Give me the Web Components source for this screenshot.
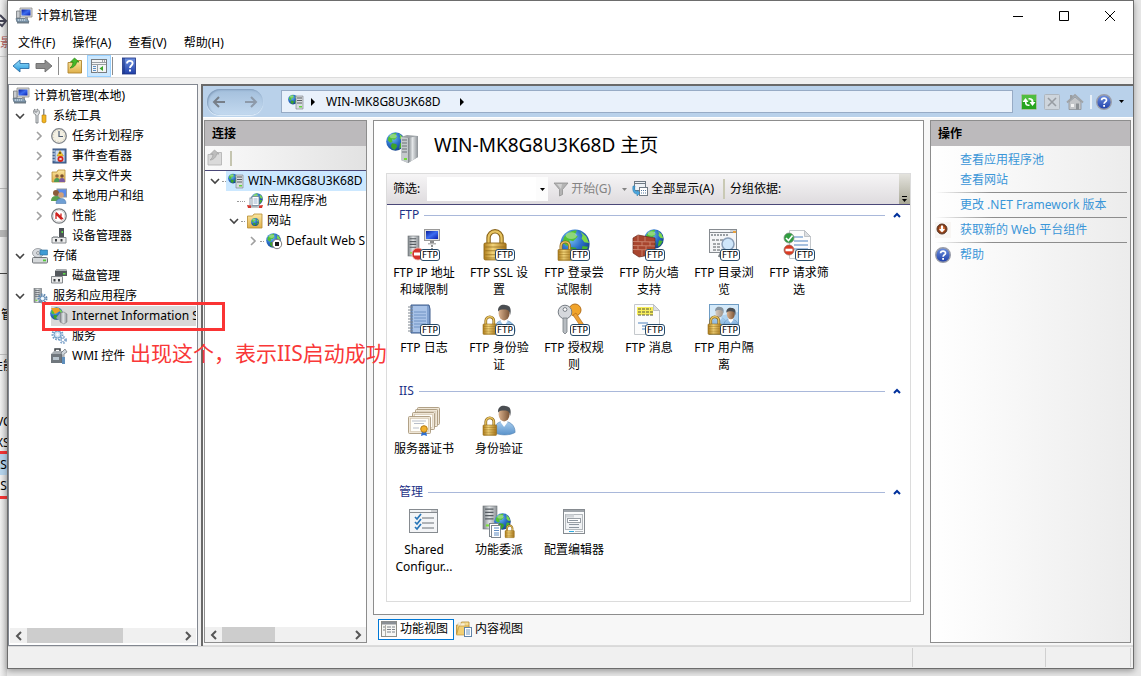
<!DOCTYPE html>
<html lang="zh-CN">
<head>
<meta charset="utf-8">
<title>计算机管理</title>
<style>
  html { height: 100%; }
  body {
    margin: 0; min-height: 100%; display: flex; background: #e6e6e6; overflow: hidden; color: #000;
    font: 12px/20px "Noto Sans", "Noto Sans CJK SC", sans-serif;
  }
  desk-sliver { flex: none; width: 7px; }
  mmc-window { flex: 1; min-width: 0; margin: 0 7px 7px 0; }
</style>
</head>
<body>
<desk-sliver></desk-sliver>
<mmc-window heading="计算机管理">
  <menu-strip slot="menu" items="文件(F)|操作(A)|查看(V)|帮助(H)"></menu-strip>
  <tool-strip slot="tools"></tool-strip>
  <console-tree slot="tree">
    <tree-row level="0" icon="computer">计算机管理(本地)</tree-row>
    <tree-row level="1" icon="tools" state="open">系统工具</tree-row>
    <tree-row level="2" icon="clock" state="closed">任务计划程序</tree-row>
    <tree-row level="2" icon="eventlog" state="closed">事件查看器</tree-row>
    <tree-row level="2" icon="share" state="closed">共享文件夹</tree-row>
    <tree-row level="2" icon="users" state="closed">本地用户和组</tree-row>
    <tree-row level="2" icon="perf" state="closed">性能</tree-row>
    <tree-row level="2" icon="device">设备管理器</tree-row>
    <tree-row level="1" icon="storage" state="open">存储</tree-row>
    <tree-row level="2" icon="disk">磁盘管理</tree-row>
    <tree-row level="1" icon="services" state="open">服务和应用程序</tree-row>
    <tree-row level="2" icon="iis" class="selected">Internet Information S</tree-row>
    <tree-row level="2" icon="gears">服务</tree-row>
    <tree-row level="2" icon="wmi">WMI 控件</tree-row>
  </console-tree>
  <iis-console slot="detail">
    <address-band slot="band" host="WIN-MK8G8U3K68D"></address-band>
    <side-panel slot="left" heading="连接">
      <connection-list></connection-list>
    </side-panel>
    <home-view slot="center" heading="WIN-MK8G8U3K68D 主页">
      <feature-group heading="FTP">
        <feature-item icon="f-ip" ftp>FTP IP 地址和域限制</feature-item>
        <feature-item icon="f-lock" ftp>FTP SSL 设置</feature-item>
        <feature-item icon="f-globelock" ftp>FTP 登录尝试限制</feature-item>
        <feature-item icon="f-wall" ftp>FTP 防火墙支持</feature-item>
        <feature-item icon="f-browse" ftp>FTP 目录浏览</feature-item>
        <feature-item icon="f-filter" ftp>FTP 请求筛选</feature-item>
        <feature-item icon="f-log" ftp>FTP 日志</feature-item>
        <feature-item icon="f-auth" ftp>FTP 身份验证</feature-item>
        <feature-item icon="f-keys" ftp>FTP 授权规则</feature-item>
        <feature-item icon="f-msg" ftp>FTP 消息</feature-item>
        <feature-item icon="f-iso" ftp>FTP 用户隔离</feature-item>
      </feature-group>
      <feature-group heading="IIS">
        <feature-item icon="f-cert">服务器证书</feature-item>
        <feature-item icon="f-auth">身份验证</feature-item>
      </feature-group>
      <feature-group heading="管理">
        <feature-item icon="f-shared">Shared Configur...</feature-item>
        <feature-item icon="f-deleg">功能委派</feature-item>
        <feature-item icon="f-config">配置编辑器</feature-item>
      </feature-group>
    </home-view>
    <side-panel slot="right" heading="操作">
      <action-links></action-links>
    </side-panel>
  </iis-console>
  <red-note slot="note">出现这个，表示IIS启动成功</red-note>
</mmc-window>

<script>
/* ---------- icon drawings ---------- */
const DEFS = `<defs>
<radialGradient id="sea" cx=".35" cy=".3" r=".8"><stop offset="0" stop-color="#7cc4f4"/><stop offset=".5" stop-color="#2a6fc9"/><stop offset="1" stop-color="#123a80"/></radialGradient>
<linearGradient id="steel"><stop offset="0" stop-color="#7d8388"/><stop offset=".45" stop-color="#e3e6e8"/><stop offset="1" stop-color="#8c9196"/></linearGradient>
<linearGradient id="gold"><stop offset="0" stop-color="#b07e1c"/><stop offset=".4" stop-color="#f2d47a"/><stop offset="1" stop-color="#a8751a"/></linearGradient>
<linearGradient id="scr" x2="1" y2="1"><stop offset="0" stop-color="#0a1f9c"/><stop offset=".5" stop-color="#3d6df0"/><stop offset="1" stop-color="#0a1fae"/></linearGradient>
<linearGradient id="fold" y2="1" x2="0"><stop offset="0" stop-color="#fbe6a0"/><stop offset="1" stop-color="#dfb04a"/></linearGradient>
<linearGradient id="skin"><stop offset="0" stop-color="#d9b08c"/><stop offset="1" stop-color="#7a5436"/></linearGradient>
<linearGradient id="shirt" x2="0" y2="1"><stop offset="0" stop-color="#a9cdee"/><stop offset="1" stop-color="#5a93cb"/></linearGradient>
<linearGradient id="blueb" x2="0" y2="1"><stop offset="0" stop-color="#6f92e0"/><stop offset="1" stop-color="#1f3fa8"/></linearGradient>
<linearGradient id="sky" x2="0" y2="1"><stop offset="0" stop-color="#9be0fb"/><stop offset="1" stop-color="#2496dc"/></linearGradient>
</defs>`;
const globe = (x, y, s) => `<g transform="translate(${x} ${y}) scale(${s / 16})"><circle cx="8" cy="8" r="7.8" fill="url(#sea)"/>
<path d="M2 4.5C4 1.5 7 .5 9 .8L8 3 9.500 4 7 6.500 5 6 5.500 8.500 3.500 9 1.500 7Z" fill="#52c234"/><path d="M11 1.500 14 4 15.500 7.500 13 7 11.500 5 12 3.500Z" fill="#7bd84a"/><path d="M5 9.500 8.500 10 9.500 12 7.500 15 5.500 14.500 4 12Z" fill="#3da22a"/><path d="M12 9 15 9.500 13 13 11 14Z" fill="#49b52f"/><ellipse cx="6" cy="3.500" rx="3" ry="1.800" fill="#fff" opacity=".35"/></g>`;
const server = (x, y, w, h) => `<g transform="translate(${x} ${y})"><rect width="${w}" height="${h}" fill="url(#steel)" stroke="#6d7276" stroke-width=".6"/><path d="M${w * .15} ${h * .14}H${w * .75}M${w * .15} ${h * .28}H${w * .75}M${w * .15} ${h * .42}H${w * .75}M${w * .15} ${h * .56}H${w * .75}" stroke="#565c62" stroke-width="${h / 18}"/><rect x="${w * .2}" y="${h * .8}" width="${w * .25}" height="${h * .09}" fill="#7be03a"/></g>`;
const lock = (x, y, s) => `<g transform="translate(${x} ${y}) scale(${s / 20})"><path d="M3.500 11V6a5 5 0 0 1 10 0v5" fill="none" stroke="#8a6418" stroke-width="3.400"/><path d="M3.500 11V6a5 5 0 0 1 10 0v5" fill="none" stroke="#e8c562" stroke-width="1.700"/><rect x="0" y="10" width="17" height="13" rx="1" fill="url(#gold)" stroke="#8f6818" stroke-width=".7"/><path d="M1 13H16M1 16H16M1 19H16M1 21.500H16" stroke="#8f6818" stroke-width=".8" opacity=".7"/></g>`;
const person = (x, y, s) => `<g transform="translate(${x} ${y}) scale(${s / 20})"><path d="M2 24C2 16 6 14 11 14s10 3 10 10c-5 3-14 3-19 0Z" fill="url(#shirt)" stroke="#5a88b5" stroke-width=".6"/><path d="M8 12h6v3l-3 4-3-4Z" fill="#fff"/><ellipse cx="11" cy="7.500" rx="5" ry="6.500" fill="url(#skin)"/><path d="M5.500 6C5 1 9-1 12 0c4 0 6 3 4.500 9-.5-4-2-5-5-5-3 0-5 0-6 2Z" fill="#4a4e52"/></g>`;
const monitor = (x, y, s) => `<g transform="translate(${x} ${y}) scale(${s / 16})"><rect x=".5" y=".5" width="15" height="11" fill="#e0e0dc" stroke="#9a9a9a"/><rect x="2" y="2" width="12" height="8" fill="url(#scr)"/><path d="M6 12h4v2H6Z" fill="#8a8a8a"/><path d="M4 14h8v1.500H4Z" fill="#b5b5b5"/></g>`;
const page = (x, y, w, h) => `<path d="M${x} ${y}h${w - 6}l6 6v${h - 6}H${x}Z" fill="#fcfcfc" stroke="#c4c8cc"/><path d="M${x + w - 6} ${y}v6h6Z" fill="#dcdfe2" stroke="#b4b8bc" stroke-width=".8"/>`;
const win = (x, y, w, h) => `<rect x="${x}" y="${y}" width="${w}" height="${h}" fill="#f4f5f7" stroke="#868b90"/><path d="M${x} ${y + 3}h${w}" stroke="#868b90"/><path d="M${x + w - 6} ${y + 1.5}h5" stroke="#5f6469" stroke-dasharray="1 1"/>`;
const cog = (x, y, r, c) => `<circle cx="${x}" cy="${y}" r="${r}" fill="none" stroke="${c}" stroke-width="2" stroke-dasharray="1.600 1.200"/><circle cx="${x}" cy="${y}" r="${r - 1.5}" fill="#cfe2f2" stroke="${c}"/><circle cx="${x}" cy="${y}" r="1.200" fill="#fff"/>`;
const cert = (x, y) => `<rect x="${x}" y="${y}" width="22" height="17" rx="1" fill="#efe6d6" stroke="#a8977c" stroke-width=".9"/><rect x="${x + 2}" y="${y + 2}" width="18" height="13" fill="#fffefa" stroke="#cdbfa6" stroke-width=".6"/>`;
const helpBall = `<circle cx="8" cy="8" r="7.300" fill="url(#blueb)" stroke="#9a9da8" stroke-width="1.400"/><path d="M5.600 6.200C5.600 3.400 10.600 3.400 10.500 6.200 10.400 7.900 8.100 8 8.100 9.800" fill="none" stroke="#fff" stroke-width="1.700"/><rect x="7.200" y="11" width="1.800" height="1.800" fill="#fff"/>`;
const ICONS = {
  computer: `<path d="M4 0h12v9H4Z" fill="#dcdcd6" stroke="#8d8d8d" stroke-width=".8"/><path d="M5.500 1.500h9v6h-9Z" fill="url(#scr)"/><path d="M.5 3h3.500v7H.5Z" fill="#c9cccf" stroke="#74797d" stroke-width=".8"/><path d="M0 10.500h11l2 3.500H1Z" fill="#8aa3b8" stroke="#4f6272" stroke-width=".7"/><path d="M1 14h12v1.500H1Z" fill="#6e7d88"/><path d="M2 12h8" stroke="#e8eef3" stroke-dasharray="1 1"/><path d="M9 9h3v2H9Z" fill="#9a9a9a"/>`,
  tools: `<path d="M4 15V7C1 6 1 2 3 1v3h2V1c3 1 3 5 1 6v8Z" fill="#e2e4e6" stroke="#6d7276" stroke-width=".8"/><path d="M11 1h1.500v6H11Z" fill="#8a8f94"/><path d="M10 7h4v7q-2 2-4 0Z" fill="#f2b521" stroke="#b07a10" stroke-width=".6"/>`,
  clock: `<circle cx="8" cy="8" r="7.300" fill="#f3f0e4" stroke="#80858a" stroke-width="1.300"/><circle cx="8" cy="8" r="5.600" fill="none" stroke="#d0c9b0" stroke-dasharray="1 2"/><path d="M8 3v5.500h4" fill="none" stroke="#4e5e76" stroke-width="1.200"/>`,
  eventlog: `<rect x="2" y="1" width="13" height="14" fill="#5577a8" stroke="#35507c"/><rect x="4.500" y="2.500" width="9" height="11" fill="#cddcf0"/><path d="M1 3h3M1 6h3M1 9h3M1 12h3" stroke="#dfe5ec"/><path d="M9 2.500 12.500 8H6Z" fill="#f9c52b" stroke="#b58910" stroke-width=".5"/><path d="M9 4v2" stroke="#000"/><circle cx="9.500" cy="11" r="3" fill="#d8261c"/><path d="m8.500 10 2 2m0-2-2 2" stroke="#fff"/>`,
  share: `<path d="M1 4h5l1-2h7v12H1Z" fill="url(#fold)" stroke="#b58a30" stroke-width=".8"/><circle cx="6" cy="8" r="1.800" fill="#9a6a40"/><circle cx="11" cy="8" r="1.800" fill="#7a5030"/><path d="M3 14q0-4 3-4t3 4Z" fill="#4d9a55"/><path d="M8 14q0-4 3-4t3 4Z" fill="#7a5aa0"/>`,
  users: `<rect x="6" y="1" width="9.500" height="8" fill="#5a8ae8" stroke="#8f979f"/><circle cx="5" cy="5" r="3" fill="#8a5c3a"/><path d="M0 13q0-5 5-5t5 5Z" fill="#5aa04e"/><circle cx="10" cy="7" r="2.800" fill="#d0a07a"/><path d="M5 15.500q0-5 5-5t5 5Z" fill="#6f9fd4" stroke="#416fa5" stroke-width=".5"/>`,
  perf: `<circle cx="8" cy="8" r="7.200" fill="#fff" stroke="#75797d" stroke-width="1.300"/><circle cx="8" cy="8" r="5.800" fill="none" stroke="#c9c9c9" stroke-width=".7"/><path d="M5 11V6l5 5V5.500M5 4.500l7 6.500" fill="none" stroke="#d0201c" stroke-width="1.300"/>`,
  device: `<rect x="8" y="0" width="5" height="9" fill="#4e5357"/><rect x="10.500" y="3" width="1.500" height="2" fill="#5fe04a"/><path d="M1 9.500h14v5.500H1Z" fill="#ececec" stroke="#85898d"/><rect x="4" y="11" width="2" height="2.500" fill="#3b3f43"/><rect x="9.500" y="11" width="2" height="2.500" fill="#3b3f43"/><path d="M2 8h5v1.500H2Z" fill="#b7babd"/>`,
  storage: `<ellipse cx="6" cy="5" rx="5.500" ry="4.500" fill="#d7dade" stroke="#8e9398" stroke-width=".8"/><circle cx="6" cy="5" r="1.400" fill="#fff" stroke="#8e9398"/><rect x="8" y="2" width="7.500" height="5" fill="#3f9bd4" stroke="#2a6c98" stroke-width=".6"/><rect x=".5" y="9.500" width="15" height="5.500" rx="1" fill="#d5d8da" stroke="#707478"/><rect x="11" y="11.500" width="3" height="1.800" fill="#52c838"/>`,
  disk: `<path d="M4 3l2-2h9l1 2v5H4Z" fill="#54595d"/><path d="M4 3l2-2h9l1 2Z" fill="#a9adb0"/><rect x="12" y="5" width="2.500" height="1.500" fill="#5fe04a"/><path d="M.5 8.500h11v6.500H.5Z" fill="#ececec" stroke="#85898d"/><rect x="2.500" y="11" width="2" height="2.500" fill="#3b3f43"/><rect x="7" y="11" width="2" height="2.500" fill="#3b3f43"/>`,
  services: server(2, 0.5, 7.5, 14) + cog(10.5, 10.5, 4, '#5d87b0'),
  iis: globe(-1, -1, 13) + `<path d="M0 0 8 0 9 3 4 6Z" fill="#f0a020"/><path d="M9 5l4-1 3 2v8l-3 2-4-2Z" fill="url(#steel)" stroke="#777" stroke-width=".5"/><path d="M5 10l4-5v8Z" fill="#8fa6b8"/>`,
  gears: cog(6.5, 6.5, 5, '#6d9cc6') + cog(12, 12, 3, '#88aace'),
  wmi: `<path d="M0 6h13v9H0Z" fill="#70777d"/><path d="M0 6l3-3h9l1 3Z" fill="#a7adb2"/><path d="M4 3V1h5v2" fill="none" stroke="#3d4246" stroke-width="1.500"/><path d="M10 5l4-4 2 3-3 2v9h-2V7Z" fill="#cfd6dc" stroke="#545b61" stroke-width=".6"/><rect x="2" y="9" width="6" height="3" fill="#b7c3cc"/><path d="M11 9h3v7h-3Z" fill="#5f8fbd"/>`,
  back: `<path d="M0 8 7 2v3.500h9v5H7V14Z" fill="url(#sky)" stroke="#2c6ea5" stroke-width=".9"/>`,
  fwd: `<path d="M16 8 9 2v3.500H0v5h9V14Z" fill="#8d8d8d" stroke="#6b6b6b" stroke-width=".9"/>`,
  up: `<path d="M1 4.500h5l1-2h7.500V15H1Z" fill="url(#fold)" stroke="#b0852c" stroke-width=".9"/><path d="M3 10C4.500 9 6 7 6 4H3.500L7.500 0 12 4H9.500C9.500 7 6 10 3 10Z" fill="#46b928" stroke="#2a8515" stroke-width=".7"/>`,
  upoff: `<path d="M1 4.500h5l1-2h7.500V15H1Z" fill="#dadada" stroke="#b5b5b5" stroke-width=".9"/><path d="M3 10C4.500 9 6 7 6 4H3.500L7.500 0 12 4H9.500C9.500 7 6 10 3 10Z" fill="#bdbdbd" stroke="#a2a2a2" stroke-width=".7"/>`,
  props: `<rect x=".5" y="1.500" width="15" height="13" fill="#f5f5f5" stroke="#777c80"/><path d="M1 4.500h14M1 6.500h14M6.500 7v8" stroke="#9a9fa3"/><path d="M2 8.500h3M2 10.500h3M2 12.500h3" stroke="#5b8fc4"/><path d="M12 8v5l-3.500-2.500Z" fill="#3aa528"/><path d="M11 3h3" stroke="#555" stroke-dasharray="1 1"/>`,
  helpbook: `<rect x="1.500" width="13" height="16" fill="url(#blueb)" stroke="#1d3180" stroke-width=".8"/><path d="M3 0v16" stroke="#16307e"/><path d="M6 5.500C6 2 12 2 11.600 5.500 11.500 7.500 9 7.500 9 10" fill="none" stroke="#fff" stroke-width="1.900"/><rect x="8" y="11.500" width="2" height="2" fill="#fff"/>`,
  help: helpBall,
  host: globe(0, 0.5, 10) + `<path d="M8 2h7v13H8Z" fill="#d9dcde" stroke="#767b80" stroke-width=".6"/><path d="M9 4h5M9 6.500h5M9 9h5" stroke="#595f64"/><rect x="11" y="12" width="3" height="1.500" fill="#5fd63a"/>`,
  pool: globe(4, 0, 12) + `<rect x="3" y="5" width="7" height="8" fill="#fff" stroke="#6d8296" stroke-width=".8"/><rect x="5" y="3.500" width="7" height="9" fill="#fff" stroke="#6d8296" stroke-width=".8"/><path d="M6.500 6h4M6.500 8h4M6.500 10h4" stroke="#7d9cc0" stroke-width=".8"/><path d="M0 12l4 .5v2.500H1ZM16 12l-4 .5v2.500h3Z" fill="#d5362c"/><path d="M4 14h8" stroke="#8e9296"/>`,
  sites: `<path d="M.5 3h5l1.500-2H15v14H.5Z" fill="url(#fold)" stroke="#b58a30" stroke-width=".8"/>` + globe(4, 5, 8),
  site: globe(0, 0, 15) + `<circle cx="11" cy="11" r="4.700" fill="#fff" stroke="#7d7d7d"/><rect x="9" y="9" width="4" height="4" fill="#1d1d1d"/>`,
  refresh: `<rect x=".5" y=".5" width="15" height="15" rx="1" fill="#27a51f" stroke="#a9c0a5"/><path d="M1 1h14v6H1Z" fill="#69cf55" opacity=".6"/><path d="M1.500 8 4.500 4 7.500 8H5.500V9.500H4V8ZM14.500 8 11.500 12 8.500 8H10.500C10.500 6 9.500 5.500 7.500 5.500V4C11 4 12.500 5 12.500 8ZM5.500 8C5.500 10 6 10.500 8.500 10.500V12C5 12 4 11 4 8Z" fill="#fff"/>`,
  stop: `<rect x=".5" y=".5" width="15" height="15" rx="1" fill="#ced5dc" stroke="#aeb6be"/><path d="m4 4 8 8m0-8-8 8" stroke="#979ca2" stroke-width="1.600"/>`,
  home: `<path d="M2 8v7.500h12V8L8 3Z" fill="#c4c6c9" stroke="#8d9195" stroke-width=".8"/><path d="M0 8.500 8 1l8 7.500" fill="none" stroke="#a0a4a8" stroke-width="1.800"/><path d="M3 1h2.500v3L3 6Z" fill="#9a9ea2"/><rect x="4" y="10" width="3" height="3" fill="#f2f2f2"/><rect x="9" y="9.500" width="3" height="6" fill="#8d9195"/>`,
  funnel: `<path d="M1 2h14l-5.500 6.500v5L6.500 15V8.500Z" fill="#b4b4b4" stroke="#909090" stroke-width=".8"/><path d="M4 3h5l-1 5Z" fill="#d2d2d2"/>`,
  showall: `<rect x="2.500" y=".5" width="11" height="9" fill="#eef2f6" stroke="#707a84"/><path d="M2.500 2.500h11" stroke="#707a84"/><rect x="7.500" y="6.500" width="8" height="8" fill="#fff" stroke="#707a84"/><path d="M9 9.500h6M9 12h6" stroke="#52789e" stroke-dasharray="1 1"/><path d="M1 5c-1 5 1 8 4 8v2l3-3-3-3v2C3 10 2 8 3 5Z" fill="#4aa5dd" stroke="#2879a8" stroke-width=".5"/>`,
  features: `<rect x=".5" y=".5" width="15" height="15" fill="#f7f7f4" stroke="#8d8d86"/><path d="M1 2h14" stroke="#8a8f95" stroke-width="3"/><path d="M4.500 4v11" stroke="#b0b0a8"/><path d="M6 6h4M6 8.500h4M6 11h4M11 6h3M11 8.500h3M11 11h3M2 6h2M2 9h2" stroke="#7d8288"/>`,
  content: `<path d="M.5 4h4l1-3H13v12H.5Z" fill="url(#fold)" stroke="#b58a30" stroke-width=".8"/><path d="M2 2h7v10H2Z" fill="#fff" stroke="#c0a050" stroke-width=".5" opacity=".6"/><path d="M.5 14 3 5h10l-2 9Z" fill="#f2cf73" stroke="#b58a30" stroke-width=".6"/><rect x="8.500" y="6.500" width="7" height="9" fill="#fff" stroke="#5f83a8"/><path d="M10 9h4M10 11h4M10 13h4" stroke="#6c98c4"/>`,
  down: `<rect width="16" height="16" fill="#f8f6f4"/><circle cx="7" cy="7" r="5" fill="#8a3c16" stroke="#5b3a2a"/><circle cx="7" cy="7" r="3" fill="#d0703a"/><path d="M6 3.500h2V7h2L7 10.500 4 7h2Z" fill="#fff"/>`
};
const BIG = {
  'host32': globe(0, 1, 19) + `<path d="M15 6 21 4 32 5V26L22 32 15 29Z" fill="#9ba1a5"/><path d="M15 6 22 7V32L15 29Z" fill="#c4c9cc"/><path d="M22 7 32 5V26L22 32Z" fill="url(#steel)"/><path d="M16 9h5M16 12h5M16 15h5M16 18h5M16 21h5" stroke="#6d7377"/><rect x="18" y="27" width="3" height="2" fill="#72dc38"/>`,
  'f-ip': server(0, 7, 11, 20) + monitor(16, 0, 16) + `<path d="M24 16v4" stroke="#222" stroke-dasharray="2 1"/><circle cx="10" cy="25" r="6" fill="#d5342c" stroke="#f0b0a8" stroke-width=".8"/><rect x="6" y="23.500" width="8" height="3" fill="#fff"/>`,
  'f-lock': lock(1, 1, 26),
  'f-globelock': globe(2, 0, 30) + lock(0, 12, 17),
  'f-wall': globe(11, 0, 20) + `<path d="M0 9 5 6 22 9V25L6 28 0 24Z" fill="#a8452e" stroke="#6b2a1c" stroke-width=".7"/><path d="M0 12.500 22 13M0 16.500 22 17M0 20.500 22 21M5 6V12.500M12 8V12.500M9 13V17M17 13V17M5 17V20.500M13 17V21M9 21V27M17 21V26" stroke="#d08f78" stroke-width=".8"/>`,
  'f-browse': win(1.5, 0.5, 27, 23) + `<path d="M3 6h18" stroke="#9a9fa4" stroke-dasharray="2 1" stroke-width="2"/><path d="M4 11h12M5 15h7M5 18h7M5 21h7" stroke="#53585d" stroke-dasharray="3 1"/><circle cx="20" cy="15" r="6" fill="#cfe6fa" stroke="#8b9fb8" stroke-width="1.500"/><path d="M15 20l-4 8" stroke="#7c8288" stroke-width="2.500"/><rect x="25" y="2" width="3" height="2" fill="#e9a03a"/>`,
  'f-filter': page(6.5, 1.5, 21, 28) + `<path d="M11 8h9M11 12h14M11 16h14M11 20h14" stroke="#4f83c0"/><circle cx="6" cy="9" r="5" fill="#2f9e3f" stroke="#7d8a7f" stroke-width=".7"/><path d="M3 9l2.500 2.500L9.500 6.500" fill="none" stroke="#fff" stroke-width="1.600"/><circle cx="6" cy="21" r="5" fill="#dc3a22" stroke="#8f6a60" stroke-width=".7"/><rect x="2.500" y="19.700" width="7" height="2.600" fill="#fff"/>`,
  'f-log': `<path d="M3 1h18l1 4v24H3Z" fill="#7fa0cf" stroke="#3f5c8c"/><path d="M5 2h14v26H5Z" fill="#a9c3e8"/><path d="M6 8h12M6 11h12M6 14h12M6 17h12M6 20h12M6 23h12" stroke="#6f92c4"/><path d="M0 3h5M0 6h5M0 9h5M0 12h5M0 15h5M0 18h5M0 21h5M0 24h5M0 27h5" stroke="#7d858e"/>`,
  'f-auth': person(9, 1, 22) + lock(0, 12, 16),
  'f-keys': `<circle cx="17" cy="6" r="6" fill="#f1a42a" stroke="#b5701a"/><path d="M18 9l8 12-3 2-8-12Z" fill="#eda035" stroke="#b5701a" stroke-width=".7"/><circle cx="7" cy="8" r="6.800" fill="#d5d8dc" stroke="#777d84"/><circle cx="7" cy="5.500" r="1.900" fill="#fff" stroke="#777d84"/><path d="M5 14h4v14l-2 2-2-2Z" fill="#b8bdc2" stroke="#777d84" stroke-width=".8"/>`,
  'f-msg': page(1.5, 0.5, 25, 30) + `<path d="M4 3h16v8H4Z" fill="#f8ee5a"/><path d="M5 5h13M5 8h16M5 11h16" stroke="#55553a" stroke-dasharray="3 1"/><path d="M5 19h10M9 22h7M9 25h7" stroke="#4f83c0"/>`,
  'f-iso': `<rect x="1.500" y=".5" width="29" height="30" fill="#aed2f0" stroke="#6e9cc4"/><path d="M2 1h28v7L2 14Z" fill="#e4f2fc" opacity=".7"/><g opacity=".55">${person(3, 3, 15)}</g>` + person(14, 4, 16) + lock(0, 12, 16),
  'f-cert': cert(9.5, 2.5) + cert(7.5, 4.5) + cert(4.5, 7.5) + cert(0.5, 11.5) + `<path d="M4 16h14M6 18.500h10M5 23h6" stroke="#b9bfca"/><path d="M14 26l-1 5 3-1 3 1-1-5Z" fill="#2f6fd0"/><circle cx="16" cy="24" r="3.300" fill="#f1b02c" stroke="#b57c14"/>`,
  'f-shared': win(1.5, 3.500, 28, 23) + `<path d="M14 12h12M14 17h12M14 22h12" stroke="#6a7076"/><path d="m7 11 2 2 4-5M7 16l2 2 4-5M7 21l2 2 4-5" fill="none" stroke="#2a76b8" stroke-width="1.700"/>`,
  'f-deleg': server(0, 0, 14, 23) + globe(11, 7, 17) + `<rect x="6.500" y="17.500" width="9" height="13" fill="#fff" stroke="#7d858d"/><rect x="8.500" y="19.500" width="9" height="12" fill="#fff" stroke="#7d858d"/><path d="M11 22h5M11 24.500h5M11 27h5M11 29h5" stroke="#5f8cc2"/>` + lock(22, 19, 11),
  'f-config': `<rect x="5.500" y="3.500" width="21" height="24" fill="#fafbfc" stroke="#868b90"/><path d="M6 5h20" stroke="#9ea4aa" stroke-width="2"/><rect x="7.500" y="8.500" width="17" height="15" fill="#f0f2f4" stroke="#b4b9bd"/><path d="M8 8.500h8v3H8Z" fill="#d0d4d8"/><rect x="9.500" y="12.500" width="13" height="4" fill="#fff" stroke="#9aa0a6"/><path d="M11 14.500h9M11 18.500h10M11 21.500h10" stroke="#8d96a0"/><path d="M11 25.500h5" stroke="#2fa9dc"/><path d="M17 25.500h8" stroke="#b4b9bd"/>`
};

/* ---------- base element ---------- */
class Base extends HTMLElement {
  connectedCallback() {
    if (this.shadowRoot) return;
    const t = document.createElement('template');
    t.innerHTML = `<style>*{box-sizing:border-box}button{font:inherit;color:inherit;border:0;background:none;padding:0;margin:0}:host{box-sizing:border-box}${this.css ? this.css() : ''}</style>${this.html()}`;
    this.attachShadow({ mode: 'open' }).appendChild(t.content.cloneNode(true));
  }
  at(n, d = '') { return this.getAttribute(n) || d; }
}
const def = (name, css, html) => customElements.define(name, class extends Base {
  css() { return css; }
  html() { return typeof html === 'function' ? html(this) : html; }
});

def('ui-icon', `:host{display:inline-flex;flex:none}svg{display:block;overflow:visible}`, el => {
  const n = el.at('name'), big = n in BIG, s = big ? 32 : 16;
  return `<svg width="${s}" height="${s}" viewBox="0 0 ${s} ${s}" aria-hidden="true">${DEFS}${big ? BIG[n] : ICONS[n]}</svg>`;
});

/* Slice of the windows behind this one */
def('desk-sliver', `
  :host{display:flex;flex-direction:column;overflow:hidden;background:linear-gradient(90deg,#f0f0f0,#d2d2d2);white-space:nowrap;line-height:21px}
  div{flex:none}
  span{display:block;width:24px;margin-left:-8px}
  .far{margin-left:-4px}
  .ink{height:57px;border-bottom:1px solid #c5c5c5;color:#a55}
  .ink span{margin-left:0}
  .pen{width:7px;height:20px;display:block;margin:12px 0 0}
  .plain{height:247px;background:linear-gradient(transparent 0 131px,#b5b5b5 131px 132px,transparent 132px 173px,#b5b5b5 173px 180px,transparent 180px 216px,#444 216px 217px,transparent 217px)}
  .r1{height:50px}.r1 span{margin-left:1px}.r2{height:57px;border-top:1px solid #bbb}
  .r2 span{margin-left:-9px}
  .names{height:40px}
  .hit{border:solid #f03535;border-width:3px 0;height:48px}
  .on{background:#b4d2ea}
`, `<div class="ink"><svg class="pen" viewBox="0 0 7 20" aria-hidden="true"><path d="M0 3 6 9 2 14 0 12M0 9H6" fill="none" stroke="#445" stroke-width="2"/></svg><span>景</span></div>
<div class="plain"></div><div class="r1"><span>管</span></div><div class="r2"><span>性能</span></div>
<div class="names"><span class="far">VC</span><span class="far">XS</span></div><div class="hit"><span class="on">IIS</span><span>IIS</span></div>`);

def('mmc-window', `
  :host{display:flex;flex-direction:column;position:relative;border:1px solid #6d6d6d;background:#f0f0f0;box-shadow:0 2px 6px #0005}
  header{display:flex;align-items:center;height:30px;padding-left:8px;background:#fff}
  h1{flex:1;margin:0 0 0 5px;font-size:12px;font-weight:400}
  header button{width:46px;height:30px;display:grid;place-items:center}
  main{flex:1;min-height:0;display:grid;grid-template-columns:190px minmax(0,1fr);gap:3px;margin-top:6px}
  footer{height:22px;border-top:1px solid #d9d9d9;display:grid;grid-template-columns:1fr 133px 85px 2px}
  footer i{border-right:1px solid #d0d0d0;margin:1px 0}
`, el => `<header><ui-icon name="computer"></ui-icon><h1>${el.at('heading')}</h1>
<button aria-label="最小化"><svg width="10" height="10"><path d="M0 5.500H10" stroke="#000"/></svg></button>
<button aria-label="最大化"><svg width="10" height="10"><path d="M.5 .5H9.500V9.500H.5Z" fill="none" stroke="#000"/></svg></button>
<button aria-label="关闭"><svg width="10" height="10"><path d="M0 0 10 10M10 0 0 10" stroke="#000"/></svg></button></header>
<slot name="menu"></slot><slot name="tools"></slot><main><slot name="tree"></slot><slot name="detail"></slot></main><footer><i></i><i></i><i></i></footer><slot name="note"></slot>`);

def('menu-strip', `:host{display:flex;gap:17px;height:24px;padding:0 10px;background:#fff;border-bottom:1px solid #b0b0b0}button{white-space:nowrap}`,
  el => el.at('items').split('|').map(t => `<button>${t}</button>`).join(''));

def('tool-strip', `:host{display:flex;align-items:center;height:23px;padding-left:5px;background:#fff;border-bottom:1px solid #dcdcdc}
  button{display:flex}button+button{margin-left:7px}i{width:1px;height:18px;background:#8d8d8d;margin:0 8px 0 6px}
  .on{width:24px;height:22px;background:#cce8ff;border:1px solid #99d1ff;justify-content:center;align-items:center}button+.on{margin-left:4px}.on+i{margin:0 8px 0 1px}`,
  `<button aria-label="后退"><ui-icon name="back"></ui-icon></button><button aria-label="前进"><ui-icon name="fwd"></ui-icon></button><i></i>
<button aria-label="上移一级"><ui-icon name="up"></ui-icon></button><button class="on" aria-label="显示/隐藏"><ui-icon name="props"></ui-icon></button><i></i><button aria-label="帮助"><ui-icon name="helpbook"></ui-icon></button>`);

def('tree-row', `
  :host{display:flex;align-items:center;height:20px;white-space:nowrap;overflow:hidden;padding-left:4px}
  :host([level="1"]){padding-left:4px}:host([level="2"]){padding-left:23px}
  button,.gap{flex:none;width:14px;height:14px;margin-right:5px;display:grid;place-items:center}
  .body{flex:1;display:flex;align-items:center;height:20px}
  :host(.selected) .body{background:#d9d9d9}
  .body span{padding-left:5px}`, el => {
  const s = el.at('state'), lead = el.at('level') === '0' ? '' : s ? `<button aria-label="${s === 'open' ? '折叠' : '展开'}"><svg width="10" height="10"><path d="${s === 'open' ? 'M1 3 5 7 9 3' : 'M3 1 7 5 3 9'}" fill="none" stroke="${s === 'open' ? '#444' : '#a0a0a0'}" stroke-width="1.600"/></svg></button>` : '<i class="gap"></i>';
  return `${lead}<div class="body"><ui-icon name="${el.at('icon')}"></ui-icon><span><slot></slot></span></div>`;
});

def('scroll-rail', `
  :host{display:flex;height:15px;background:#f0f0f0}
  button{flex:none;width:17px;display:grid;place-items:center}
  .track{flex:1}.thumb{height:15px;background:#cdcdcd}
  :host([size="s"]) .thumb{width:42%}:host([size="l"]) .thumb{width:63%}`,
  `<button aria-label="向左"><svg width="8" height="10"><path d="M6 1 2 5 6 9" fill="none" stroke="#555" stroke-width="2"/></svg></button><div class="track"><div class="thumb"></div></div>
<button aria-label="向右"><svg width="8" height="10"><path d="M2 1 6 5 2 9" fill="none" stroke="#555" stroke-width="2"/></svg></button>`);

def('console-tree', `:host{display:flex;flex-direction:column;border:1px solid #828790;background:#fff;padding:1px 1px 2px 0;min-width:0}.rows{flex:1}scroll-rail{margin-left:1px}`,
  `<div class="rows"><slot></slot></div><scroll-rail size="l"></scroll-rail>`);

def('iis-console', `
  :host{display:flex;flex-direction:column;min-width:0;border:solid #696969;border-width:2px 0 0 2px;background:#f7f7f7}
  .cols{flex:1;display:grid;grid-template-columns:163px minmax(0,1fr) 201px;gap:6px;padding:2px 2px 2px 1px;border:solid #fff;border-width:1px 0 0;border-bottom:1px solid #dcdcdc}`,
  `<slot name="band"></slot><div class="cols"><slot name="left"></slot><slot name="center"></slot><slot name="right"></slot></div>`);

def('address-band', `
  :host{display:flex;align-items:center;height:31px;padding:0 9px 0 4px;background:#b9d1ea}
  .nav{display:flex;width:56px;height:26px;justify-content:space-between;align-items:center;padding:0 5px;border-radius:13px;background:linear-gradient(#a3bfdc,#c3d9ef);box-shadow:inset 1px 1px 2px #7e99b8,0 1px 1px #e2eefa}
  .nav button{display:flex}
  .box{flex:1;display:flex;align-items:center;height:23px;margin:0 8px 0 18px;padding-left:6px;background:#e9f1fb;border:1px solid #97abc5;white-space:nowrap}
  .box b{font-weight:400;padding:0 12px 0 10px}
  .box svg{flex:none;margin-left:6px}
  .btns{display:flex;align-items:center;gap:7px;height:28px}.btns button{display:flex}.btns i{width:2px;height:14px;background:#e8f0f8;margin:0 -3px 0 0}`,
  el => `<div class="nav"><button aria-label="后退"><svg width="14" height="12"><path d="M13 6H2M7 1 2 6 7 11" fill="none" stroke="#777f89" stroke-width="2"/></svg></button><button aria-label="前进"><svg width="14" height="12"><path d="M1 6H12M7 1 12 6 7 11" fill="none" stroke="#8d9aaa" stroke-width="2"/></svg></button></div>
<div class="box"><ui-icon name="host"></ui-icon><svg width="6" height="8"><path d="M1 0 5 4 1 8Z"/></svg><b>${el.at('host')}</b><svg width="6" height="8"><path d="M1 0 5 4 1 8Z"/></svg></div>
<div class="btns"><button aria-label="刷新"><ui-icon name="refresh"></ui-icon></button><button aria-label="停止"><ui-icon name="stop"></ui-icon></button><button aria-label="主页"><ui-icon name="home"></ui-icon></button><i></i><button aria-label="帮助"><ui-icon name="help"></ui-icon></button><svg width="5" height="3"><path d="M0 0H5L2.500 3Z"/></svg></div>`);

def('side-panel', `
  :host{display:flex;flex-direction:column;min-width:0;border:1px solid #8d8d8d;background:#fff}
  h2{margin:0;height:25px;line-height:25px;padding-left:7px;font-size:12px;font-weight:700;background:#bcbabc}
  ::slotted(*){flex:1}`, el => `<h2>${el.at('heading')}</h2><slot></slot>`);

def('connection-list', `
  :host{display:flex;flex-direction:column;min-width:0}
  .bar{height:25px;display:flex;align-items:center;gap:7px;padding-left:2px;background:linear-gradient(90deg,#fafafa,#e2e2e2);border-bottom:1px solid #4a4878}
  .bar i{width:2px;height:15px;background:#c5c5b0}
  .bar button{display:flex}
  .rows{flex:1}
  .row{display:flex;align-items:center;height:20px;white-space:nowrap;overflow:hidden;padding-left:3px}
  .row button{flex:none;width:14px;height:14px;display:grid;place-items:center}
  .row ui-icon{margin-left:2px;margin-right:4px}
  .lead{flex:none;width:4px;border-top:1px dotted #999}
  .hot{flex:1;display:flex;align-items:center;background:#cce8ff}
  .a{padding-left:32px}.a .lead{width:8px}.b{padding-left:22px}.c{padding-left:41px}
`, (() => {
  const ch = o => `<button aria-label="${o ? '折叠' : '展开'}"><svg width="10" height="10"><path d="${o ? 'M1 3 5 7 9 3' : 'M3 1 7 5 3 9'}" fill="none" stroke="${o ? '#444' : '#a0a0a0'}" stroke-width="1.600"/></svg></button>`;
  return `<div class="bar"><button aria-label="上移"><ui-icon name="upoff"></ui-icon></button><i></i></div>
<div class="rows"><div class="row">${ch(1)}<i class="lead"></i><div class="hot"><ui-icon name="host"></ui-icon>WIN-MK8G8U3K68D</div></div>
<div class="row a"><i class="lead"></i><ui-icon name="pool"></ui-icon>应用程序池</div>
<div class="row b">${ch(1)}<i class="lead"></i><ui-icon name="sites"></ui-icon>网站</div>
<div class="row c">${ch(0)}<i class="lead"></i><ui-icon name="site"></ui-icon>Default Web S</div></div><scroll-rail size="s"></scroll-rail>`;
})());

def('home-view', `
  :host{display:grid;grid-template-rows:1fr 28px;min-width:0}
  .sheet{display:flex;flex-direction:column;background:#fff;border:1px solid #8d8d8d;padding:0 12px 12px 12px}
  .head{display:flex;align-items:center;height:52px;gap:16px}
  h2{margin:0;padding-bottom:4px;font-size:19px;line-height:28px;font-weight:400;white-space:nowrap}
  .list{flex:1;border:1px solid #dcdcdc}
  .bar{display:flex;align-items:center;height:31px;background:linear-gradient(#f6f5f6,#dedbde);border-bottom:1px solid #4a4878;padding-left:6px;white-space:nowrap}
  .combo{display:flex;width:121px;height:24px;margin:0 5px 0 7px;background:#fff}
  input{flex:1;min-width:0;border:0;outline:0;padding:0 4px;background:#fff;font:inherit}
  .combo button{width:12px;display:grid;place-items:center;background:#fcfcfc}
  .bar button{display:flex;align-items:center;justify-content:center}
  .go{gap:2px;color:#838383}.all{gap:3px}
  .tri{margin:0 5px 0 11px}
  .bar i{width:2px;height:20px;background:#c9c9b4;margin:0 5px 0 9px}
  .bar .more{margin-left:auto;width:11px;align-self:stretch;background:linear-gradient(#e4e3de,#a9a896);align-items:flex-end}
  .tabs{display:flex;align-items:center;padding-left:5px}
  .tabs button{display:flex;align-items:center;gap:3px;height:21px;padding:0 5px 0 2px;border:1px solid transparent}
  .tabs .on{background:#fff;border-color:#0078d7}.tabs button+button{padding-left:1px}
`, el => `<div class="sheet"><div class="head"><ui-icon name="host32"></ui-icon><h2>${el.at('heading')}</h2></div>
<div class="list"><div class="bar"><label for="q">筛选:</label><div class="combo"><input id="q" type="text"><button aria-label="筛选历史"><svg width="5" height="3"><path d="M0 0H5L2.500 3Z"/></svg></button></div>
<button class="go"><ui-icon name="funnel"></ui-icon>开始(G)</button><svg class="tri" width="5" height="3"><path d="M0 0H5L2.500 3Z" fill="#838383"/></svg><button class="all"><ui-icon name="showall"></ui-icon>全部显示(A)</button><i></i><span>分组依据:</span>
<button class="more" aria-label="更多"><svg width="7" height="9"><path d="M1 1.500H6"  stroke="#000" stroke-width="1"/><path d="M1 4H6L3.500 7Z"/></svg></button></div><slot></slot></div></div>
<div class="tabs"><button class="on"><ui-icon name="features"></ui-icon>功能视图</button><button><ui-icon name="content"></ui-icon>内容视图</button></div>`);

def('feature-group', `
  :host{display:block;margin-bottom:3px}
  header{display:flex;align-items:center;height:20px;padding:0 8px 0 12px;margin-bottom:3px}
  h3{margin:0 5px 0 0;font-size:12px;font-weight:400;color:#1e3287}
  hr{flex:1;height:1px;border:0;margin:0;background:#a9b8da}
  button{width:10px;height:10px;margin-left:7px;display:grid;place-items:center}
  .grid{display:grid;grid-template-columns:repeat(auto-fill,75px);grid-auto-rows:75px}
`, el => `<header><h3>${el.at('heading')}</h3><hr><button aria-label="折叠"><svg width="8" height="6"><path d="M1 5 4 2 7 5" fill="none" stroke="#00309c" stroke-width="2"/></svg></button></header><div class="grid"><slot></slot></div>`);

def('feature-item', `
  :host{display:block}
  button{width:74px;display:flex;flex-direction:column;align-items:center;line-height:17px}
  .pic{position:relative;display:flex;margin-top:1px;margin-bottom:3px}
  .txt{width:66px;text-align:center}
  em{position:absolute;right:0;bottom:0;height:12px;padding:0 1px;border:1px solid #274a68;border-radius:3px;background:#fff;font:9px/10px "DejaVu Sans",sans-serif;color:#000}
`, el => `<button><span class="pic"><ui-icon name="${el.at('icon')}"></ui-icon>${el.hasAttribute('ftp') ? '<em>FTP</em>' : ''}</span><span class="txt"><slot></slot></span></button>`);

def('action-links', `
  :host{display:block;padding:4px 3px 0 4px;background:linear-gradient(90deg,#fff,#ececec)}
  div{display:flex;align-items:center;height:20px;padding-left:25px;white-space:nowrap}
  .ic{padding-left:0;gap:9px}
  a{color:#3a96d8;text-decoration:none}
  hr{border:0;height:1px;margin:2px 0;background:linear-gradient(90deg,transparent,#8d8d8d 30%)}
`, `<div><a href="#">查看应用程序池</a></div><div><a href="#">查看网站</a></div><hr><div><a href="#">更改 .NET Framework 版本</a></div><hr>
<div class="ic"><ui-icon name="down"></ui-icon><a href="#">获取新的 Web 平台组件</a></div><hr><div class="ic"><ui-icon name="help"></ui-icon><a href="#">帮助</a></div>`);

/* Annotation drawn over the window: a frame round the IIS node and its caption */
def('red-note', `
  :host{position:absolute;left:34px;top:301px;color:#f93838;pointer-events:none}
  div{width:183px;height:29px;border:3px solid #fa3434}
  p{margin:8px 0 0 88px;font-size:21px;line-height:28px;white-space:nowrap}
`, `<div></div><p><slot></slot></p>`);
</script>
</body>
</html>
